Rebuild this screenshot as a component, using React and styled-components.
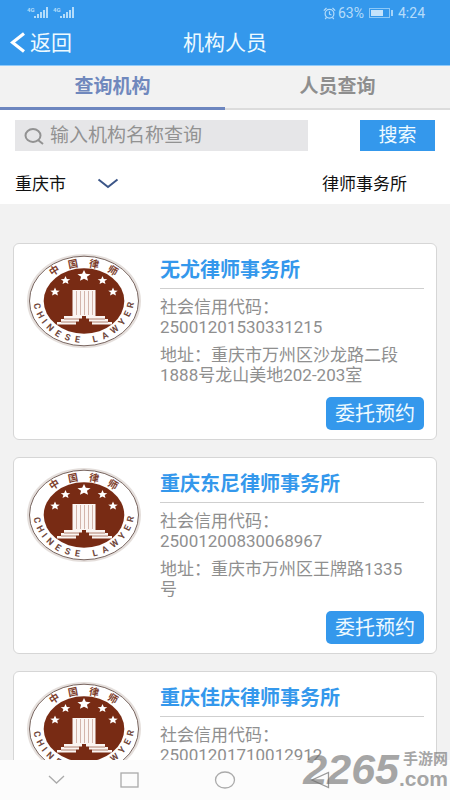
import React, { useState } from "react";
import styled, { createGlobalStyle } from "styled-components";

const BLUE = "#3498ec";

const GlobalStyle = createGlobalStyle`
  *, *::before, *::after { box-sizing: border-box; }
  body { margin: 0; background: #f2f2f2; }
  body, button, input, select {
    font-family: Roboto, "Noto Sans CJK SC", sans-serif;
  }
  h1, h2, p { margin: 0; }
`;

const Page = styled.div`
  display: flex;
  flex-direction: column;
  height: 100vh;
  overflow: hidden;
  background: #f2f2f2;
`;

const Header = styled.header`
  flex: none;
  background: ${BLUE};
  color: #eefaff;
  border-bottom: 1px solid #8fcafa;
`;

const StatusBar = styled.div`
  display: flex;
  align-items: center;
  justify-content: space-between;
  height: 26px;
  padding: 0 25px 0 27px;
  color: #b4dcfa;
  font-size: 14px;
  line-height: 26px;
`;

const StatusGroup = styled.div`
  display: flex;
  align-items: center;
  gap: ${(p) => p.$gap}px;
`;

const NavRow = styled.div`
  display: grid;
  grid-template-columns: 1fr auto 1fr;
  align-items: center;
  height: 39px;
  padding: 0 10px 6px;
`;

const BackButton = styled.button`
  display: flex;
  align-items: center;
  justify-self: start;
  gap: 5px;
  padding: 0;
  border: 0;
  background: none;
  color: inherit;
  font-size: 21px;
  line-height: 32px;
`;

const Title = styled.h1`
  font-size: 21px;
  font-weight: 400;
  line-height: 32px;
`;

const Tabs = styled.div`
  display: flex;
  flex: none;
`;

const Tab = styled.button`
  display: flex;
  flex: 1;
  align-items: center;
  justify-content: center;
  height: 44px;
  padding: 0;
  border: 0;
  border-bottom: ${(p) => (p.$active ? "3px solid #6d86bf" : "2px solid #dcdcdc")};
  background: #f2f2f2;
  color: ${(p) => (p.$active ? "#7088bd" : "#8e8e8e")};
  font-size: 19px;
  font-weight: 700;
  line-height: 40px;
`;

const SearchPanel = styled.section`
  flex: none;
  padding: 10px 15px 0;
  background: #fff;
`;

const SearchRow = styled.form`
  display: flex;
  justify-content: space-between;
  gap: 52px;
`;

const SearchField = styled.label`
  display: flex;
  flex: 1;
  align-items: center;
  gap: 6px;
  min-width: 0;
  height: 31px;
  padding: 0 9px;
  background: #e6e6e8;
`;

const SearchInput = styled.input`
  flex: 1;
  min-width: 0;
  height: 31px;
  padding: 0;
  border: 0;
  outline: 0;
  background: none;
  color: #555;
  font-size: 19px;

  &::placeholder { color: #929292; opacity: 1; }
`;

const SearchButton = styled.button`
  flex: none;
  width: 75px;
  height: 31px;
  padding: 0;
  border: 0;
  background: ${BLUE};
  color: #eefaff;
  font-size: 19px;
  line-height: 31px;
`;

const FilterRow = styled.div`
  display: flex;
  align-items: center;
  justify-content: space-between;
  height: 53px;
  padding: 12px 28px 0 0;
`;

const FilterLabel = styled.label`
  display: flex;
  align-items: center;
  gap: 31px;
`;

const FilterSelect = styled.select`
  appearance: none;
  padding: 0;
  border: 0;
  background: none;
  color: #111;
  font-size: 17px;
  line-height: 24px;
`;

const List = styled.main`
  display: flex;
  flex: 1;
  flex-direction: column;
  gap: 17px;
  min-height: 0;
  padding: 39px 13px 17px;
  overflow-y: auto;
  scrollbar-width: none;
`;

const Card = styled.article`
  display: flex;
  flex: none;
  align-items: flex-start;
  gap: 18px;
  padding: 9px 12px;
  border: 1px solid #d6d6d6;
  border-radius: 6px;
  background: #fff;
`;

const Emblem = styled.svg`
  flex: none;
  width: 116px;
  height: 96px;
`;

const Details = styled.div`
  display: flex;
  flex: 1;
  flex-direction: column;
  gap: 8px;
  min-width: 0;
`;

const FirmName = styled.h2`
  height: 36px;
  border-bottom: 1px solid #cfcfcf;
  color: ${BLUE};
  font-size: 20px;
  font-weight: 700;
  line-height: 34px;
`;

const Info = styled.p`
  padding-right: 10px;
  color: #8f8f8f;
  font-size: 17px;
  line-height: 20px;
  overflow-wrap: anywhere;
`;

const BookButton = styled.button`
  align-self: flex-end;
  width: 98px;
  height: 33px;
  margin-top: 4px;
  padding: 0;
  border: 0;
  border-radius: 5px;
  background: ${BLUE};
  color: #eefaff;
  font-size: 20px;
  line-height: 32px;
`;

const SystemBar = styled.nav`
  position: relative;
  display: grid;
  flex: none;
  grid-template-columns: 52fr 95fr 95fr 95fr;
  align-items: center;
  justify-items: center;
  height: 40px;
  padding: 0 83px 0 30px;
  background: #fcfcfc;
`;

const SystemButton = styled.button`
  display: flex;
  padding: 0;
  border: 0;
  background: none;
`;

const Watermark = styled.div`
  position: absolute;
  right: 2px;
  bottom: 10px;
  display: flex;
  align-items: flex-end;
  color: #6c6c6c;
  font-family: "Liberation Sans", "Noto Sans CJK SC", sans-serif;
  font-weight: 700;
  opacity: 0.6;
  pointer-events: none;
`;

const WatermarkNumber = styled.span`
  font-size: 43px;
  font-style: italic;
  line-height: 42px;
`;

const WatermarkSide = styled.span`
  display: flex;
  flex-direction: column;
  align-items: flex-end;
`;

const WatermarkText = styled.span`
  font-size: ${(p) => p.$size}px;
  line-height: ${(p) => p.$line}px;
`;

const firms = [
  { name: "无尤律师事务所", code: "25001201530331215", address: "重庆市万州区沙龙路二段1888号龙山美地202-203室" },
  { name: "重庆东尼律师事务所", code: "25001200830068967", address: "重庆市万州区王牌路1335号" },
  { name: "重庆佳庆律师事务所", code: "25001201710012912", address: "重庆市万州区" },
];

function Signal() {
  return (
    <svg width="21" height="13" viewBox="0 0 21 13" fill="#b4dcfa" aria-hidden="true">
      <text x="0" y="5" fontSize="6" fontWeight="700">4G</text>
      <rect x="7" y="9" width="2" height="2" />
      <rect x="10" y="7" width="2" height="4" />
      <rect x="13" y="5" width="2" height="6" />
      <rect x="16" y="3" width="2" height="8" />
      <rect x="19" y="0" width="2" height="11" />
    </svg>
  );
}

function Alarm() {
  return (
    <svg width="13" height="13" viewBox="0 0 13 13" fill="none" stroke="#b4dcfa" strokeWidth="1.2" aria-hidden="true">
      <circle cx="6.5" cy="6.8" r="4.4" />
      <path d="M.8 3.6 3.5 1M12.2 3.6 9.5 1M6.5 4.2v3l2 .8M3.5 10.4 2.2 12M9.5 10.4l1.3 1.6" />
    </svg>
  );
}

function Battery() {
  return (
    <svg width="24" height="10" viewBox="0 0 24 10" aria-hidden="true">
      <rect x=".5" y=".5" width="20" height="9" fill="none" stroke="#8cc8f7" />
      <rect x="2" y="2" width="12" height="6" fill="#c4e3fb" />
      <rect x="22" y="2" width="2" height="6" fill="#a5d4f8" />
    </svg>
  );
}

const star = (cx, cy, r) =>
  Array.from({ length: 10 }, (_, i) => {
    const a = (Math.PI * i) / 5 - Math.PI / 2;
    const d = i % 2 ? r * 0.45 : r;
    return `${(cx + d * 1.15 * Math.cos(a)).toFixed(2)},${(cy + d * Math.sin(a)).toFixed(2)}`;
  }).join(" ");

const stars = [[58, 23, 6], [39.5, 27.5, 4.4], [76.5, 27.5, 4.4], [29, 39, 4.4], [87, 39, 4.4]];

const topLetters = [["中", 28.5, 18, -33], ["国", 47, 11.5, -11], ["律", 68, 11.5, 11], ["师", 86.5, 18, 31]];

const bottomLetters = [
  ["C", 11, 53, 76], ["H", 14.5, 62, 62], ["I", 18.5, 68.5, 52], ["N", 24, 74.5, 44],
  ["E", 32, 80.5, 33], ["S", 41.5, 84.5, 20], ["E", 51.5, 86.5, 9], ["L", 69, 86, -13],
  ["A", 79, 82.5, -25], ["W", 88.5, 76.5, -38], ["Y", 96, 69, -50], ["E", 101.5, 61, -64], ["R", 104.5, 52, -77],
];

function LawyerEmblem() {
  return (
    <Emblem viewBox="0 0 116 96" role="img" aria-label="中国律师 CHINESE LAWYER">
      <ellipse cx="58" cy="48" rx="57" ry="47" fill="#e5dfdc" />
      <ellipse cx="58" cy="48" rx="54.5" ry="44.8" fill="#fff" stroke="#77645e" strokeWidth="1" />
      <ellipse cx="58" cy="48" rx="40.3" ry="32.7" fill="#782b14" />
      {stars.map(([x, y, r]) => (
        <polygon key={x} points={star(x, y, r)} fill="#fff" />
      ))}
      <path d="M46.5 37H69.5V63H79V66H82V69H86V71.5H66V68.5H63V65.5H60V63H56V65.5H53V68.5H50V71.5H31V69H35V66H38V63H46.5Z" fill="#fbf5f2" />
      <path d="M50.5 38V62M54.5 38V62M58.5 38V62M62.5 38V62M66.5 38V62" stroke="#c9a598" strokeWidth=".8" />
      <path d="M38 66H53M35 69H50M63 66H79M66 69H82" stroke="#a0634f" strokeWidth=".8" />
      {topLetters.map(([c, x, y, a]) => (
        <text key={c} transform={`translate(${x} ${y}) rotate(${a})`} y="3" textAnchor="middle" fontSize="10" fontWeight="700" fill="#7d3e2c">{c}</text>
      ))}
      {bottomLetters.map(([c, x, y, a]) => (
        <text key={`${c}${x}`} transform={`translate(${x} ${y}) rotate(${a})`} y="3" textAnchor="middle" fontSize="9" fontWeight="700" fill="#70473c">{c}</text>
      ))}
    </Emblem>
  );
}

function FirmCard({ firm }) {
  return (
    <Card>
      <LawyerEmblem />
      <Details>
        <FirmName>{firm.name}</FirmName>
        <Info>社会信用代码：<br />{firm.code}</Info>
        <Info>地址：{firm.address}</Info>
        <BookButton type="button">委托预约</BookButton>
      </Details>
    </Card>
  );
}

export default function App() {
  const [tab, setTab] = useState(0);
  return (
    <>
      <GlobalStyle />
      <Page>
        <Header>
          <StatusBar>
            <StatusGroup $gap={5}><Signal /><Signal /></StatusGroup>
            <StatusGroup $gap={5}>
              <StatusGroup $gap={2}><Alarm /><span>63%</span></StatusGroup>
              <Battery />
              <span>4:24</span>
            </StatusGroup>
          </StatusBar>
          <NavRow>
            <BackButton type="button">
              <svg width="15" height="21" viewBox="0 0 15 21" fill="none" stroke="#fff" strokeWidth="3.2" aria-hidden="true">
                <path d="M14 1.5 2.5 10.5 14 19.5" />
              </svg>
              返回
            </BackButton>
            <Title>机构人员</Title>
          </NavRow>
        </Header>
        <Tabs role="tablist">
          {["查询机构", "人员查询"].map((label, i) => (
            <Tab key={label} type="button" role="tab" aria-selected={tab === i} $active={tab === i} onClick={() => setTab(i)}>
              {label}
            </Tab>
          ))}
        </Tabs>
        <SearchPanel>
          <SearchRow onSubmit={(e) => e.preventDefault()}>
            <SearchField>
              <svg width="20" height="18" viewBox="0 0 20 18" fill="none" stroke="#929292" strokeWidth="2" aria-hidden="true">
                <ellipse cx="9" cy="8.5" rx="7.5" ry="6.5" />
                <path d="m14 13 5 4" />
              </svg>
              <SearchInput type="text" placeholder="输入机构名称查询" aria-label="输入机构名称查询" />
            </SearchField>
            <SearchButton type="submit">搜索</SearchButton>
          </SearchRow>
          <FilterRow>
            <FilterLabel>
              <FilterSelect aria-label="城市"><option>重庆市</option></FilterSelect>
              <svg width="22" height="11" viewBox="0 0 22 11" fill="none" stroke="#3c5688" strokeWidth="2" aria-hidden="true">
                <path d="m1.5 1.5 9.5 7.5 9.5-7.5" />
              </svg>
            </FilterLabel>
            <FilterSelect aria-label="机构类型"><option>律师事务所</option></FilterSelect>
          </FilterRow>
        </SearchPanel>
        <List>
          {firms.map((firm) => (
            <FirmCard key={firm.code} firm={firm} />
          ))}
        </List>
        <SystemBar>
          <SystemButton type="button" aria-label="收起">
            <svg width="22" height="10" viewBox="0 0 22 10" fill="none" stroke="#aaa" strokeWidth="1.3"><path d="m4 1 7.5 7L19 1" /></svg>
          </SystemButton>
          <SystemButton type="button" aria-label="最近任务">
            <svg width="19" height="16" viewBox="0 0 19 16" fill="none" stroke="#aaa" strokeWidth="1.3"><rect x="1" y="1" width="17" height="14" /></svg>
          </SystemButton>
          <SystemButton type="button" aria-label="主页">
            <svg width="22" height="18" viewBox="0 0 22 18" fill="none" stroke="#aaa" strokeWidth="1.3"><ellipse cx="11" cy="9" rx="9.5" ry="8" /></svg>
          </SystemButton>
          <SystemButton type="button" aria-label="返回">
            <svg width="20" height="18" viewBox="0 0 20 18" fill="none" stroke="#999" strokeWidth="1.3"><path d="M18.5 1.5v15L2 9Z" /></svg>
          </SystemButton>
          <Watermark>
            <WatermarkNumber>2265</WatermarkNumber>
            <WatermarkSide>
              <WatermarkText $size={15} $line={18}>手游网</WatermarkText>
              <WatermarkText $size={21} $line={22}>.com</WatermarkText>
            </WatermarkSide>
          </Watermark>
        </SystemBar>
      </Page>
    </>
  );
}
